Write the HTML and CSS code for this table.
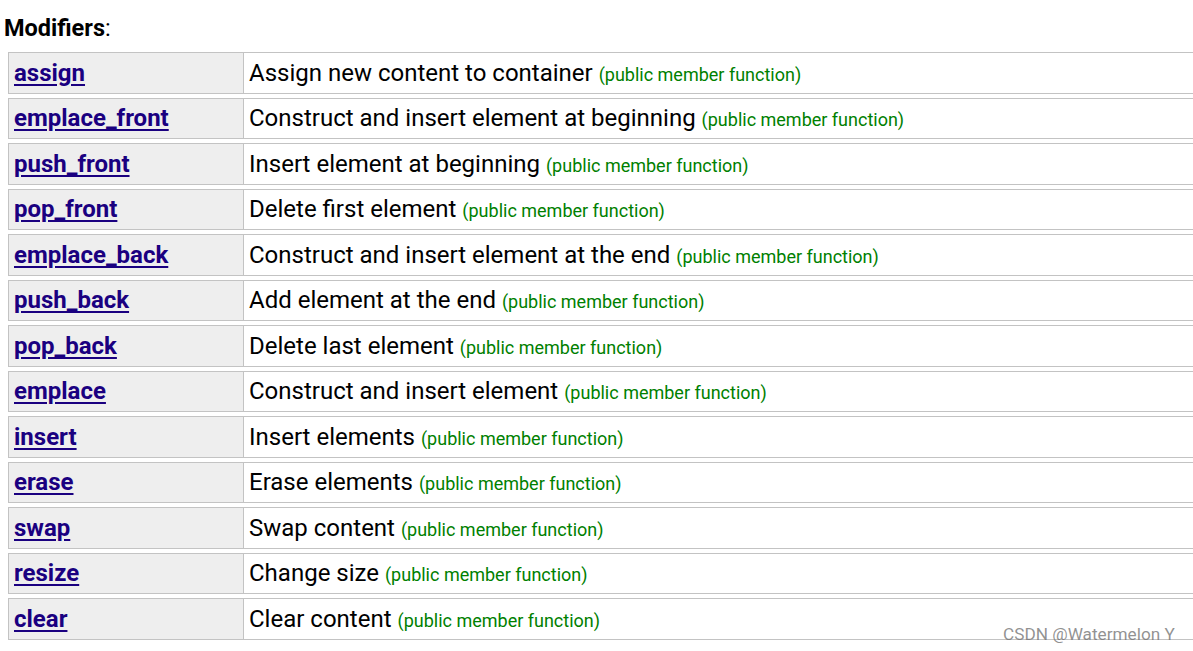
FILE: index.html
```html
<!DOCTYPE html>
<html>
<head>
<meta charset="utf-8">
<link rel="stylesheet" href="styles.css">
</head>
<body>
<h3 class="title"><b>Modifiers</b>:</h3>
<table class="links">
<tr><td class="name"><a href="#">assign</a></td><td class="desc">Assign new content to container <span class="typ">(public member function)</span></td></tr>
<tr><td class="name"><a href="#">emplace_front</a></td><td class="desc">Construct and insert element at beginning <span class="typ">(public member function)</span></td></tr>
<tr><td class="name"><a href="#">push_front</a></td><td class="desc">Insert element at beginning <span class="typ">(public member function)</span></td></tr>
<tr><td class="name"><a href="#">pop_front</a></td><td class="desc">Delete first element <span class="typ">(public member function)</span></td></tr>
<tr><td class="name"><a href="#">emplace_back</a></td><td class="desc">Construct and insert element at the end <span class="typ">(public member function)</span></td></tr>
<tr><td class="name"><a href="#">push_back</a></td><td class="desc">Add element at the end <span class="typ">(public member function)</span></td></tr>
<tr><td class="name"><a href="#">pop_back</a></td><td class="desc">Delete last element <span class="typ">(public member function)</span></td></tr>
<tr><td class="name"><a href="#">emplace</a></td><td class="desc">Construct and insert element <span class="typ">(public member function)</span></td></tr>
<tr><td class="name"><a href="#">insert</a></td><td class="desc">Insert elements <span class="typ">(public member function)</span></td></tr>
<tr><td class="name"><a href="#">erase</a></td><td class="desc">Erase elements <span class="typ">(public member function)</span></td></tr>
<tr><td class="name"><a href="#">swap</a></td><td class="desc">Swap content <span class="typ">(public member function)</span></td></tr>
<tr><td class="name"><a href="#">resize</a></td><td class="desc">Change size <span class="typ">(public member function)</span></td></tr>
<tr><td class="name"><a href="#">clear</a></td><td class="desc">Clear content <span class="typ">(public member function)</span></td></tr>
</table>
<div class="watermark">CSDN @Watermelon Y</div>
</body>
</html>
```
FILE: styles.css
```css
html, body {
  margin: 0;
  padding: 0;
  background: #fff;
  overflow: hidden;
  width: 1193px;
  height: 651px;
}
body {
  font-family: Roboto, "Liberation Sans", sans-serif;
  color: #000;
  position: relative;
}
.title {
  margin: 0;
  padding: 14px 0 0 4px;
  font-size: 23.5px;
  line-height: 28px;
  font-weight: normal;
  height: 34px;
}
.title b {
  font-weight: bold;
}
.links {
  margin-left: 8px;
  width: 1200px;
  border-collapse: separate;
  border-spacing: 0 4px;
  table-layout: fixed;
}
.links td {
  height: 39.5px;
  padding: 0 0 0 5px;
  border: 1px solid #c3c3c3;
  vertical-align: middle;
  font-size: 24px;
  white-space: nowrap;
}
.links td.name {
  width: 229px;
  background: #eeeeee;
}
.links td.desc {
  border-left: none;
  background: #fff;
}
.name a {
  color: #1a0080;
  font-weight: bold;
  text-decoration: underline;
  text-underline-offset: 3px;
}
.typ {
  color: #008000;
  font-size: 18px;
}
.watermark {
  position: absolute;
  left: 1003px;
  top: 624px;
  font-size: 17.2px;
  color: rgba(110, 110, 110, 0.75);
}
```
